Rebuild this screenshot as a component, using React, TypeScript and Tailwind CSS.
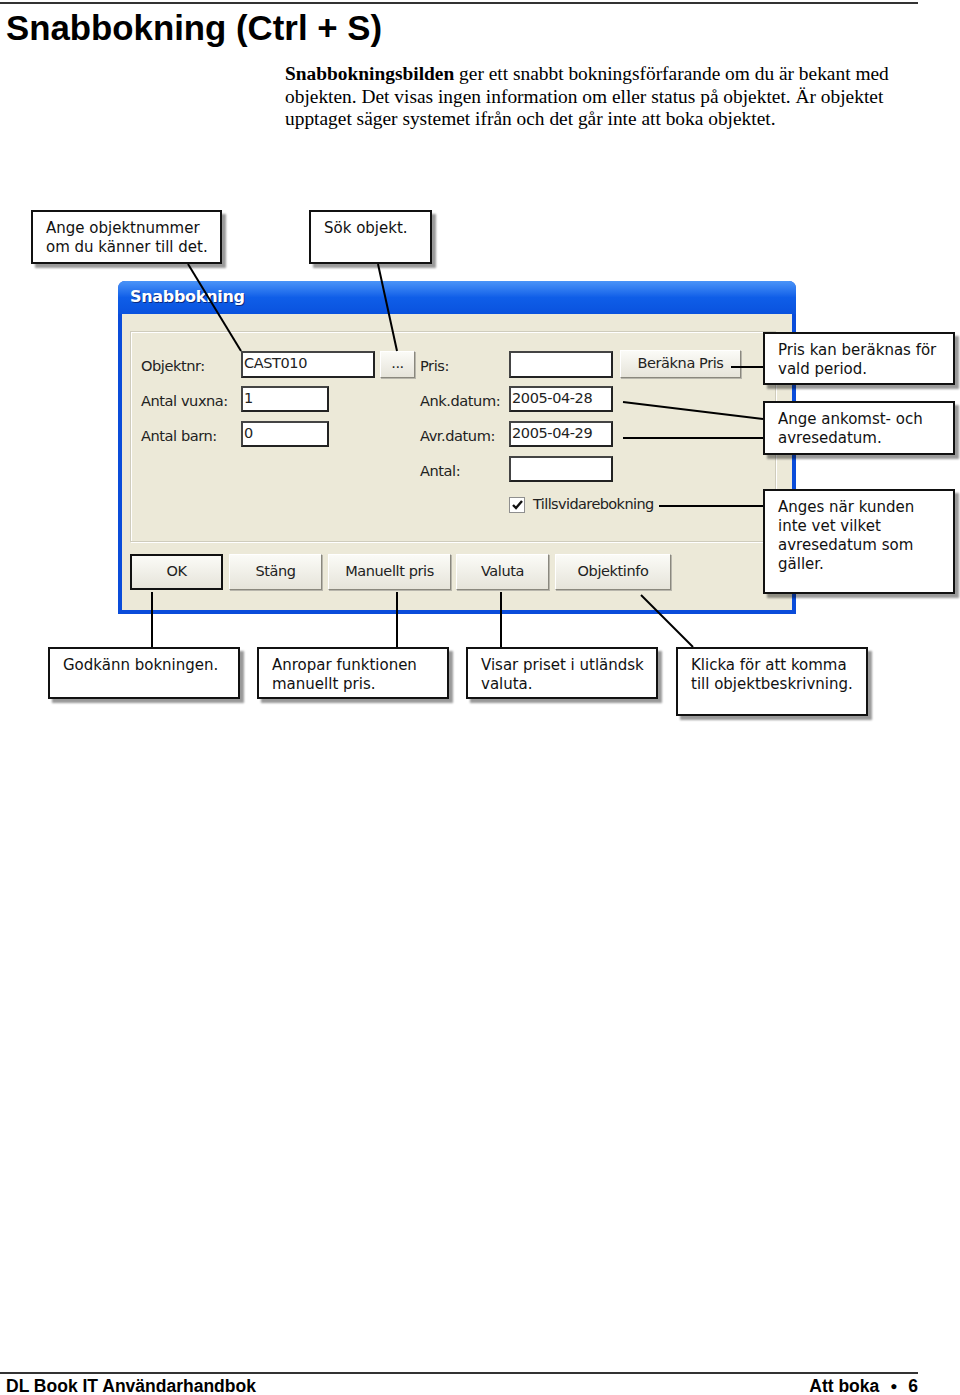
import React from 'react';

const sans = { fontFamily: '"Liberation Sans", Arial, sans-serif' };
const serif = { fontFamily: '"Liberation Serif", "Times New Roman", serif' };
const ui = { fontFamily: '"DejaVu Sans", Verdana, sans-serif' };

type CalloutProps = { x: number; y: number; w: number; h: number; children: React.ReactNode };

// Callout boxes are diagram nodes placed on the figure canvas
function Callout({ x, y, w, h, children }: CalloutProps) {
  return (
    <div
      className="absolute z-20 border-2 border-[#111] bg-white pl-[13px] pt-[7px] text-[15px] leading-[19px] text-[#111] shadow-[4px_4px_2px_rgba(0,0,0,0.4)]"
      style={{ left: x, top: y, width: w, height: h, ...ui }}
    >
      {children}
    </div>
  );
}

function Field({ w, h = 26, value }: { w: number; h?: number; value?: string }) {
  return (
    <div
      className="flex shrink-0 items-center border-2 border-t-[#444] border-l-[#444] border-r-[#222] border-b-[#222] bg-white pl-[1px] text-[14.5px] tracking-[-0.4px] text-[#222]"
      style={{ width: w, height: h }}
    >
      {value}
    </div>
  );
}

function XpButton({ w, h = 36, label, primary }: { w: number; h?: number; label: string; primary?: boolean }) {
  return (
    <div
      className={
        'flex shrink-0 items-center justify-center text-[14.5px] tracking-[-0.4px] text-[#222] bg-gradient-to-b from-[#fbfbf7] to-[#e6e4da] ' +
        (primary
          ? 'border-2 border-[#111]'
          : 'border border-t-white border-l-white border-r-[#8a887e] border-b-[#8a887e] shadow-[1px_1px_0_#b8b6ac]')
      }
      style={{ width: w, height: h }}
    >
      {label}
    </div>
  );
}

function Label({ w, text }: { w: number; text: string }) {
  return (
    <div className="shrink-0 pt-[4px] text-[14.6px] tracking-[-0.45px] text-[#222]" style={{ width: w }}>
      {text}
    </div>
  );
}

function Dialog() {
  return (
    <div className="ml-[118px] mt-[80px] w-[678px] overflow-hidden rounded-t-[7px] bg-[#0a4cda]" style={ui}>
      {/* title bar */}
      <div className="flex h-[33px] items-center bg-gradient-to-b from-[#4a94f8] via-[#0f5ee8] to-[#0a52de] pl-[12px]">
        <span className="text-[16px] font-bold tracking-[-0.3px] text-white [text-shadow:1px_1px_0_#0a2a80]">
          Snabbokning
        </span>
      </div>

      {/* client area */}
      <div className="mx-[4px] mb-[4px] h-[296px] bg-[#ece9d8] pl-[8px] pt-[17px]">
        <div className="h-[211px] w-[646px] border border-[#cfccbc] pl-[10px] pt-[19px] shadow-[inset_1px_1px_0_#ffffff,1px_1px_0_#ffffff]">
          <div className="flex h-[27px] items-center">
            <Label w={100} text="Objektnr:" />
            <Field w={134} h={27} value="CAST010" />
            <div className="ml-[5px]">
              <XpButton w={35} h={27} label="..." />
            </div>
            <div className="ml-[5px]">
              <Label w={89} text="Pris:" />
            </div>
            <Field w={104} h={27} />
            <div className="ml-[7px]">
              <XpButton w={121} h={28} label="Beräkna Pris" />
            </div>
          </div>

          <div className="mt-[8px] flex h-[26px] items-center">
            <Label w={100} text="Antal vuxna:" />
            <Field w={88} value="1" />
            <div className="w-[91px] shrink-0" />
            <Label w={89} text="Ank.datum:" />
            <Field w={104} value="2005-04-28" />
          </div>

          <div className="mt-[9px] flex h-[26px] items-center">
            <Label w={100} text="Antal barn:" />
            <Field w={88} value="0" />
            <div className="w-[91px] shrink-0" />
            <Label w={89} text="Avr.datum:" />
            <Field w={104} value="2005-04-29" />
          </div>

          <div className="mt-[9px] flex h-[26px] items-center">
            <div className="w-[279px] shrink-0" />
            <Label w={89} text="Antal:" />
            <Field w={104} />
          </div>

          <div className="mt-[15px] flex h-[16px] items-center">
            <div className="w-[368px] shrink-0" />
            <div className="flex h-[16px] w-[16px] shrink-0 items-center justify-center border border-[#8f8f8f] bg-white">
              <svg width="11" height="10" viewBox="0 0 11 10">
                <path d="M1 5 L4 8 L10 1" fill="none" stroke="#111" strokeWidth="2.4" />
              </svg>
            </div>
            <span className="ml-[8px] text-[14.5px] tracking-[-0.6px] text-[#222]">Tillsvidarebokning</span>
          </div>
        </div>

        <div className="mt-[12px] flex">
          <XpButton w={93} label="OK" primary />
          <div className="ml-[6px]">
            <XpButton w={93} label="Stäng" />
          </div>
          <div className="ml-[6px]">
            <XpButton w={123} label="Manuellt pris" />
          </div>
          <div className="ml-[5px]">
            <XpButton w={93} label="Valuta" />
          </div>
          <div className="ml-[6px]">
            <XpButton w={116} label="Objektinfo" />
          </div>
        </div>
      </div>
    </div>
  );
}

const lines: [number, number, number, number][] = [
  [188, 63, 241, 150],
  [378, 63, 397, 150],
  [731, 166, 763, 166],
  [623, 201, 763, 218],
  [623, 237, 763, 237],
  [659, 305, 763, 305],
  [152, 391, 152, 446],
  [397, 391, 397, 446],
  [501, 391, 501, 446],
  [641, 394, 693, 446],
];

export default function App() {
  return (
    <div className="flex h-[1395px] w-[960px] flex-col bg-white text-black">
      {/* header rule + title */}
      <div className="mt-[2px] h-[2px] w-[918px] bg-[#333]" />
      <h1 className="mt-[4px] pl-[6px] text-[34.8px] font-bold leading-[40px]" style={sans}>
        Snabbokning (Ctrl + S)
      </h1>

      <p className="ml-[285px] mt-[15px] text-[19.4px] leading-[22.5px]" style={serif}>
        <b>Snabbokningsbilden</b> ger ett snabbt bokningsförfarande om du är bekant med
        <br />
        objekten. Det visas ingen information om eller status på objektet. Är objektet
        <br />
        upptaget säger systemet ifrån och det går inte att boka objektet.
      </p>

      {/* figure: dialog with callouts */}
      <div className="relative mt-[70px] h-[520px] w-[960px]">
        <Dialog />

        <svg className="pointer-events-none absolute inset-0 z-10" width="960" height="520">
          {lines.map(([x1, y1, x2, y2], i) => (
            <line key={i} x1={x1} y1={y1} x2={x2} y2={y2} stroke="#000" strokeWidth="2" />
          ))}
        </svg>

        <Callout x={31} y={9} w={191} h={54}>
          Ange objektnummer
          <br />
          om du känner till det.
        </Callout>
        <Callout x={309} y={9} w={123} h={54}>
          Sök objekt.
        </Callout>
        <Callout x={763} y={131} w={192} h={53}>
          Pris kan beräknas för
          <br />
          vald period.
        </Callout>
        <Callout x={763} y={200} w={192} h={54}>
          Ange ankomst- och
          <br />
          avresedatum.
        </Callout>
        <Callout x={763} y={288} w={192} h={105}>
          Anges när kunden
          <br />
          inte vet vilket
          <br />
          avresedatum som
          <br />
          gäller.
        </Callout>
        <Callout x={48} y={446} w={192} h={52}>
          Godkänn bokningen.
        </Callout>
        <Callout x={257} y={446} w={192} h={52}>
          Anropar funktionen
          <br />
          manuellt pris.
        </Callout>
        <Callout x={466} y={446} w={192} h={52}>
          Visar priset i utländsk
          <br />
          valuta.
        </Callout>
        <Callout x={676} y={446} w={192} h={69}>
          Klicka för att komma
          <br />
          till objektbeskrivning.
        </Callout>
      </div>

      {/* footer */}
      <div className="mt-auto w-[918px]" style={sans}>
        <div className="h-[2px] bg-[#333]" />
        <div className="flex h-[21px] items-end justify-between pl-[6px] text-[17.5px] font-bold leading-[18px]">
          <span>DL Book IT Användarhandbok</span>
          <span>
            Att boka <span className="mx-[6px] text-[12px] align-[2px]">●</span> 6
          </span>
        </div>
      </div>
    </div>
  );
}
